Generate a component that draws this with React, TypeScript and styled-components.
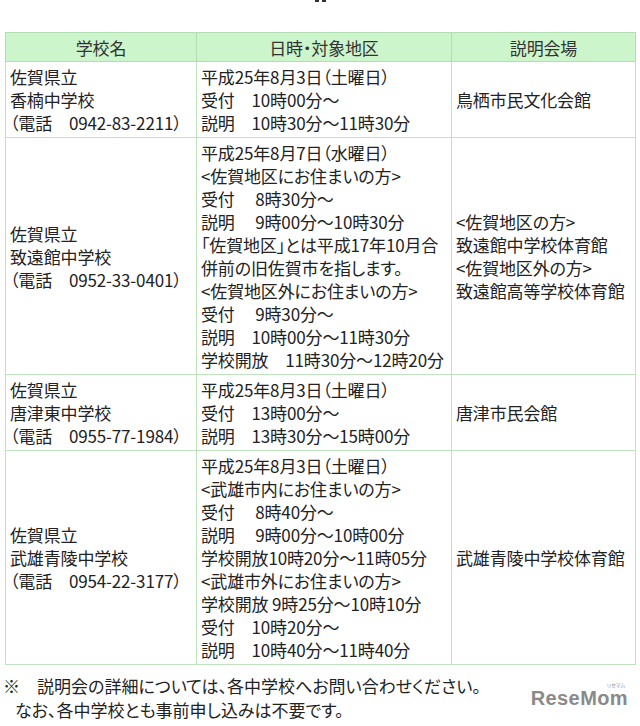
import styled, { createGlobalStyle } from "styled-components"

const GlobalStyle = createGlobalStyle`
	html, body {
		margin: 0;
		padding: 0;
		background: #fff;
	}
	body {
		font-family: "Noto Sans CJK JP", "Noto Sans", sans-serif;
		font-feature-settings: "palt";
		color: #222;
	}
`

type Row = {
	school: string[]
	schedule: string[]
	venue: string[]
}

const rows: Row[] = [
	{
		school: ['佐賀県立', '香楠中学校', '（電話　0942-83-2211）'],
		schedule: ['平成25年8月3日（土曜日）', '受付　10時00分～', '説明　10時30分～11時30分'],
		venue: ['鳥栖市民文化会館']
	},
	{
		school: ['佐賀県立', '致遠館中学校', '（電話　0952-33-0401）'],
		schedule: [
			'平成25年8月7日（水曜日）',
			'<佐賀地区にお住まいの方>',
			'受付　 8時30分～',
			'説明　 9時00分～10時30分',
			'「佐賀地区」とは平成17年10月合',
			'併前の旧佐賀市を指します。',
			'<佐賀地区外にお住まいの方>',
			'受付　 9時30分～',
			'説明　10時00分～11時30分',
			'学校開放　11時30分～12時20分'
		],
		venue: ['<佐賀地区の方>', '致遠館中学校体育館', '<佐賀地区外の方>', '致遠館高等学校体育館']
	},
	{
		school: ['佐賀県立', '唐津東中学校', '（電話　0955-77-1984）'],
		schedule: ['平成25年8月3日（土曜日）', '受付　13時00分～', '説明　13時30分～15時00分'],
		venue: ['唐津市民会館']
	},
	{
		school: ['佐賀県立', '武雄青陵中学校', '（電話　0954-22-3177）'],
		schedule: [
			'平成25年8月3日（土曜日）',
			'<武雄市内にお住まいの方>',
			'受付　 8時40分～',
			'説明　 9時00分～10時00分',
			'学校開放10時20分～11時05分',
			'<武雄市外にお住まいの方>',
			'学校開放 9時25分～10時10分',
			'受付　10時20分～',
			'説明　10時40分～11時40分'
		],
		venue: ['武雄青陵中学校体育館']
	}
]

const Page = styled.div`
	width: 640px;
	height: 726px;
	overflow: hidden;
	box-sizing: border-box;
`

const TopMark = styled.div`
	height: 32px;
	display: flex;
	justify-content: center;
	gap: 3px;

	& span {
		display: block;
		width: 4px;
		height: 2px;
		background: #333;
	}
`

const Table = styled.table`
	border-collapse: collapse;
	margin-left: 5px;
	width: 627px;
	table-layout: fixed;
	font-size: 17px;
	line-height: 23px;
	letter-spacing: -0.15px;
`

const Head = styled.th<{ $width: number }>`
	width: ${p => p.$width}px;
	background: #ccf5cc;
	border: 1px solid #b3ddb3;
	font-weight: normal;
	height: 28px;
	padding: 0;
	text-align: center;
	color: #333;
`

const Cell = styled.td<{ $align: 'top' | 'middle' }>`
	border: 1px solid #bfe3bf;
	padding: 3px 2px 3px 4px;
	vertical-align: ${p => p.$align};
	white-space: pre;
	overflow: hidden;
	color: #222;
`

const Line = styled.div``

const Footer = styled.div`
	position: relative;
	padding: 9px 0 0 3px;
	font-size: 17px;
	line-height: 24px;
	white-space: pre;
`

const Note = styled.div<{ $indent: number }>`
	padding-left: ${p => p.$indent}px;
`

const Logo = styled.div`
	position: absolute;
	right: 12px;
	top: 23px;
	font-family: "Liberation Sans", Arial, sans-serif;
	font-weight: bold;
	font-size: 20px;
	line-height: 20px;
	letter-spacing: 0.4px;
	color: #8a8a8a;

	& small {
		position: absolute;
		right: 3px;
		top: -6px;
		font-size: 5px;
		line-height: 6px;
		letter-spacing: 0;
		font-family: "Noto Sans CJK JP", sans-serif;
		font-weight: normal;
	}
`

export default function App() {
	return (
		<Page>
			<GlobalStyle />
			<TopMark><span /><span /></TopMark>
			<Table>
				<thead>
					<tr>
						<Head $width={190}>学校名</Head>
						<Head $width={254}>日時・対象地区</Head>
						<Head $width={183}>説明会場</Head>
					</tr>
				</thead>
				<tbody>
					{rows.map((row, i) => (
						<tr key={i}>
							<Cell $align="middle">
								{row.school.map((l, j) => <Line key={j}>{l}</Line>)}
							</Cell>
							<Cell $align="top">
								{row.schedule.map((l, j) => <Line key={j}>{l}</Line>)}
							</Cell>
							<Cell $align="middle">
								{row.venue.map((l, j) => <Line key={j}>{l}</Line>)}
							</Cell>
						</tr>
					))}
				</tbody>
			</Table>
			<Footer>
				<Note $indent={0}>※　説明会の詳細については、各中学校へお問い合わせください。</Note>
				<Note $indent={12}>なお、各中学校とも事前申し込みは不要です。</Note>
				<Logo>ReseMom<small>リセマム</small></Logo>
			</Footer>
		</Page>
	)
}
